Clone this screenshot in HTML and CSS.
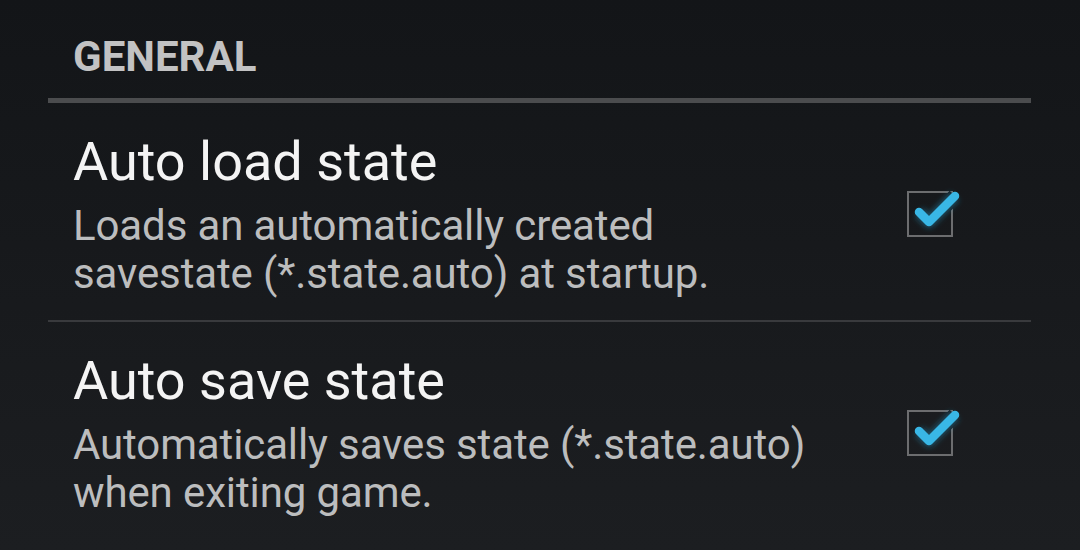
FILE: index.html
```html
<!DOCTYPE html>
<html lang="en">

<head>
    <meta charset="UTF-8">
    <meta name="viewport" content="width=device-width, initial-scale=1.0">
    <title>Settings</title>
    <link rel="stylesheet" href="styles.css">
</head>

<body>
    <div class="prefs">
        <div class="category">GENERAL</div>

        <div class="pref">
            <div class="pref-text">
                <div class="pref-title">Auto load state</div>
                <div class="pref-summary">Loads an automatically created<br>savestate (*.state.auto) at startup.</div>
            </div>
            <svg class="check" width="64" height="64" viewBox="0 0 64 64">
                <rect x="10" y="10" width="44" height="44" fill="none" stroke="#6c6d6f" stroke-width="2" />
                <polyline points="21,30 31,40 57,14" fill="none" stroke="#131518" stroke-width="15" stroke-linejoin="round" />
                <polyline points="21,30 31,40 57,14" fill="none" stroke="#33b5e5" stroke-opacity="0.35" stroke-width="13" stroke-linejoin="round" filter="url(#glow)" />
                <polyline points="21,30 31,40 57,14" fill="none" stroke="#39b7e6" stroke-width="8.5" stroke-linecap="round" stroke-linejoin="round" />
            </svg>
        </div>

        <div class="pref">
            <div class="pref-text">
                <div class="pref-title">Auto save state</div>
                <div class="pref-summary">Automatically saves state (*.state.auto)<br>when exiting game.</div>
            </div>
            <svg class="check" width="64" height="64" viewBox="0 0 64 64">
                <rect x="10" y="10" width="44" height="44" fill="none" stroke="#6c6d6f" stroke-width="2" />
                <polyline points="21,30 31,40 57,14" fill="none" stroke="#15171a" stroke-width="15" stroke-linejoin="round" />
                <polyline points="21,30 31,40 57,14" fill="none" stroke="#33b5e5" stroke-opacity="0.35" stroke-width="13" stroke-linejoin="round" filter="url(#glow)" />
                <polyline points="21,30 31,40 57,14" fill="none" stroke="#39b7e6" stroke-width="8.5" stroke-linecap="round" stroke-linejoin="round" />
            </svg>
        </div>
    </div>

    <!-- shared glow filter for the check marks -->
    <svg width="0" height="0" class="defs">
        <defs>
            <filter id="glow" x="-50%" y="-50%" width="200%" height="200%">
                <feGaussianBlur stdDeviation="2.5" />
            </filter>
        </defs>
    </svg>
</body>

</html>
```

FILE: styles.css
```css
html,
body {
    height: 100%;
}

body {
    font-family: Roboto, "Noto Sans", sans-serif;
    background: linear-gradient(to bottom, #131518, #1c1e21);
    color: #f3f3f3;
    margin: 0;
    padding: 0;
    overflow: hidden;
}

.prefs {
    padding: 0 49px 0 48px;
}

.category {
    font-size: 42px;
    font-weight: 700;
    line-height: 50px;
    color: #c2c2c3;
    padding: 32px 0 16px 25px;
    border-bottom: 5px solid #4b4c4e;
}

.pref {
    display: flex;
    align-items: center;
    padding: 27px 0 22px 25px;
    border-bottom: 2px solid #393a3d;
}

.pref:last-child {
    border-bottom: none;
}

.pref-text {
    flex: 1;
}

.pref-title {
    font-size: 54px;
    line-height: 64px;
    color: #f4f4f4;
}

.pref-summary {
    font-size: 42px;
    line-height: 48px;
    letter-spacing: -0.12px;
    color: #bcbdbe;
    margin-top: 8px;
}

.check {
    flex-shrink: 0;
    margin-right: 69px;
    overflow: visible;
}

.defs {
    position: absolute;
}
```
